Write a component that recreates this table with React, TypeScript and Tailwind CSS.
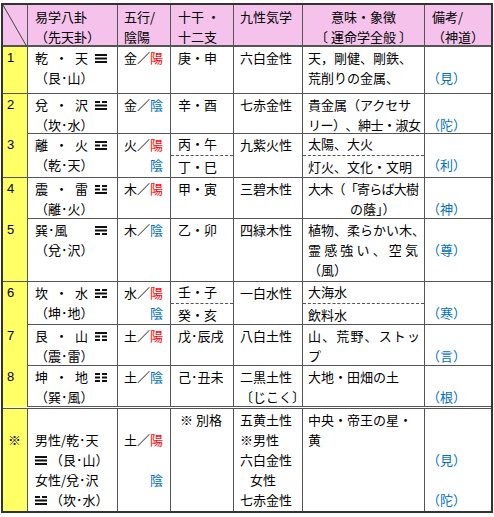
type Bars = [boolean, boolean, boolean];

const cols = "grid grid-cols-[24px_90px_53px_63px_69px_122px_67px]";
const edge = "border-l border-[#555]";
const red = "text-[#ff0000]";
const blue = "text-[#0070c0]";

// trigram, bars listed top to bottom, true = solid
function Tri({ bars, className = "" }: { bars: Bars; className?: string }) {
  return (
    <svg width="12" height="9" viewBox="0 0 12 9" className={className}>
      {bars.map((solid, i) =>
        solid ? (
          <rect key={i} x="0" y={i * 3.5} width="12" height="2" fill="#111" />
        ) : (
          <g key={i}>
            <rect x="0" y={i * 3.5} width="5" height="2" fill="#111" />
            <rect x="7" y={i * 3.5} width="5" height="2" fill="#111" />
          </g>
        )
      )}
    </svg>
  );
}

function Gua({ a, b, t }: { a: string; b: string; t: Bars }) {
  return (
    <div className="flex w-[72px] items-center justify-between">
      <span>{a}</span>
      <span>・</span>
      <span>{b}</span>
      <Tri bars={t} />
    </div>
  );
}

function J({ text, className }: { text: string; className: string }) {
  return (
    <div className={`flex justify-between ${className}`}>
      {text.split("").map((c, i) => (
        <span key={i}>{c}</span>
      ))}
    </div>
  );
}

function Split({ top, bottom, pad }: { top: React.ReactNode; bottom: React.ReactNode; pad: string }) {
  return (
    <div className="flex h-full flex-col">
      <div className={`h-[21px] ${pad}`}>{top}</div>
      <div className={`flex-1 border-t border-dashed border-[#555] pt-[1px] ${pad}`}>{bottom}</div>
    </div>
  );
}

const Blank = () => <div>&nbsp;</div>;

interface RowProps {
  num: string;
  h: string;
  gua: React.ReactNode;
  sub: string;
  gogyo: React.ReactNode;
  kan: React.ReactNode;
  star: React.ReactNode;
  imi: React.ReactNode;
  note: string;
  split?: boolean;
  border?: string;
}

function Row({ num, h, gua, sub, gogyo, kan, star, imi, note, split, border = "border-t" }: RowProps) {
  return (
    <div className={`${cols} ${border} border-[#555] ${h}`}>
      <div className="bg-[#ffff66] pl-[4px] pt-[1px] font-['Liberation_Sans','Noto_Sans_CJK_JP',sans-serif]">
        {num}
      </div>
      <div className={`${edge} pl-[7px] pt-[1px]`}>
        {gua}
        <div>{sub}</div>
      </div>
      <div className={`${edge} pl-[6px] pt-[1px]`}>{gogyo}</div>
      <div className={`${edge} ${split ? "" : "pl-[7px] pt-[1px]"}`}>{kan}</div>
      <div className={`${edge} pl-[6px] pt-[1px]`}>{star}</div>
      <div className={`${edge} ${split ? "" : "pl-[5px] pt-[1px]"} whitespace-nowrap`}>{imi}</div>
      <div className={`${edge} pl-[2px] pt-[1px] ${blue}`}>
        <Blank />
        <div>{note}</div>
      </div>
    </div>
  );
}

const Yang = ({ k }: { k: string }) => (
  <div>
    {k}／<span className={red}>陽</span>
  </div>
);
const Yin = ({ k }: { k: string }) => (
  <div>
    {k}／<span className={blue}>陰</span>
  </div>
);
const YinOnly = () => <div className={`pl-[26px] ${blue}`}>陰</div>;

export default function App() {
  return (
    <div className="min-h-screen bg-white pl-[1px] pt-[3px] text-[13px] leading-[20px] text-black font-['Noto_Sans_CJK_JP',sans-serif]">
      <div className="w-[492px] border-2 border-[#333]">
        {/* header */}
        <div className={`${cols} h-[40px] bg-[#f5c2ec]`}>
          <div className="relative">
            <svg className="absolute inset-0 h-full w-full">
              <line x1="0" y1="0" x2="100%" y2="100%" stroke="#444" strokeWidth="1" />
            </svg>
          </div>
          <div className={`${edge} pl-[7px] pt-[2px]`}>
            <div>易学八卦</div>
            <div>（先天卦）</div>
          </div>
          <div className={`${edge} pl-[6px] pt-[2px]`}>
            <div>五行/</div>
            <div>陰陽</div>
          </div>
          <div className={`${edge} pl-[7px] pt-[2px]`}>
            <div>十干 ・</div>
            <div>十二支</div>
          </div>
          <div className={`${edge} pl-[6px] pt-[2px]`}>
            <div>九性気学</div>
          </div>
          <div className={`${edge} pt-[2px] text-center`}>
            <div>意味・象徴</div>
            <div>〔 運命学全般 〕</div>
          </div>
          <div className={`${edge} pl-[7px] pt-[2px]`}>
            <div>備考/</div>
            <div>（神道）</div>
          </div>
        </div>

        <Row
          num="1"
          h="h-[48px]"
          border="border-t-2"
          gua={<Gua a="乾" b="天" t={[true, true, true]} />}
          sub="（艮･山）"
          gogyo={<Yang k="金" />}
          kan="庚・申"
          star="六白金性"
          imi={
            <>
              <div>天，剛健、剛鉄、</div>
              <div>荒削りの金属、</div>
            </>
          }
          note="（見）"
        />
        <Row
          num="2"
          h="h-[40px]"
          gua={<Gua a="兌" b="沢" t={[false, true, true]} />}
          sub="（坎･水）"
          gogyo={<Yin k="金" />}
          kan="辛・酉"
          star="七赤金性"
          imi={
            <>
              <div>貴金属（アクセサ</div>
              <J text="リー）、紳士・淑女" className="w-[112px] tracking-[-1px]" />
            </>
          }
          note="（陀）"
        />
        <Row
          num="3"
          h="h-[44px]"
          split
          gua={<Gua a="離" b="火" t={[true, false, true]} />}
          sub="（乾･天）"
          gogyo={
            <>
              <Yang k="火" />
              <YinOnly />
            </>
          }
          kan={<Split pad="pl-[7px]" top="丙・午" bottom="丁・巳" />}
          star="九紫火性"
          imi={<Split pad="pl-[5px]" top="太陽、大火" bottom="灯火、文化・文明" />}
          note="（利）"
        />
        <Row
          num="4"
          h="h-[41px]"
          gua={<Gua a="震" b="雷" t={[false, false, true]} />}
          sub="（離･火）"
          gogyo={<Yang k="木" />}
          kan="甲・寅"
          star="三碧木性"
          imi={
            <>
              <J text="大木（「寄らば大樹" className="w-[110px] tracking-[-1px]" />
              <div className="pl-[42px]">の蔭」）</div>
            </>
          }
          note="（神）"
        />
        <Row
          num="5"
          h="h-[63px]"
          gua={
            <div className="flex w-[72px] items-center justify-between">
              <span>巽･風</span>
              <Tri bars={[true, true, false]} />
            </div>
          }
          sub="（兌･沢）"
          gogyo={<Yin k="木" />}
          kan="乙・卯"
          star="四緑木性"
          imi={
            <>
              <div>植物、柔らかい木、</div>
              <J text="霊感強い、空気" className="w-[110px]" />
              <div>（風）</div>
            </>
          }
          note="（尊）"
        />
        <Row
          num="6"
          h="h-[43px]"
          split
          gua={<Gua a="坎" b="水" t={[false, true, false]} />}
          sub="（坤･地）"
          gogyo={
            <>
              <Yang k="水" />
              <YinOnly />
            </>
          }
          kan={<Split pad="pl-[7px]" top="壬・子" bottom="癸・亥" />}
          star="一白水性"
          imi={<Split pad="pl-[5px]" top="大海水" bottom="飲料水" />}
          note="（寒）"
        />
        <Row
          num="7"
          h="h-[41px]"
          gua={<Gua a="艮" b="山" t={[true, false, false]} />}
          sub="（震･雷）"
          gogyo={<Yang k="土" />}
          kan="戊･辰戌"
          star="八白土性"
          imi={
            <>
              <J text="山、荒野、ストッ" className="w-[112px]" />
              <div>プ</div>
            </>
          }
          note="（言）"
        />
        <Row
          num="8"
          h="h-[41px]"
          gua={<Gua a="坤" b="地" t={[false, false, false]} />}
          sub="（巽･風）"
          gogyo={<Yin k="土" />}
          kan="己･丑未"
          star={
            <>
              <div>二黒土性</div>
              <div>〔じこく〕</div>
            </>
          }
          imi={<div>大地・田畑の土</div>}
          note="（根）"
        />

        {/* special row */}
        <div className={`${cols} h-[105px] border-t-[3px] border-double border-[#555]`}>
          <div className="bg-[#ffff66] pl-[5px] pt-[1px]">
            <Blank />
            <div>※</div>
          </div>
          <div className={`${edge} border-solid pl-[7px] pt-[1px] whitespace-nowrap`}>
            <Blank />
            <div>男性/乾･天</div>
            <div className="flex items-center">
              <Tri bars={[true, true, true]} />
              <span className="ml-[3px]">（艮･山）</span>
            </div>
            <div>女性/兌･沢</div>
            <div className="flex items-center">
              <Tri bars={[false, true, true]} />
              <span className="ml-[3px]">（坎･水）</span>
            </div>
          </div>
          <div className={`${edge} border-solid pl-[6px] pt-[1px]`}>
            <Blank />
            <Yang k="土" />
            <Blank />
            <YinOnly />
          </div>
          <div className={`${edge} border-solid pl-[9px] pt-[1px]`}>
            <div>※ 別格</div>
          </div>
          <div className={`${edge} border-solid pl-[6px] pt-[1px]`}>
            <div>五黄土性</div>
            <div>※男性</div>
            <div>六白金性</div>
            <div className="pl-[10px]">女性</div>
            <div>七赤金性</div>
          </div>
          <div className={`${edge} border-solid pl-[5px] pt-[1px] whitespace-nowrap`}>
            <div>中央・帝王の星・</div>
            <div>黄</div>
          </div>
          <div className={`${edge} border-solid pl-[2px] pt-[1px] ${blue}`}>
            <Blank />
            <Blank />
            <div>（見）</div>
            <Blank />
            <div>（陀）</div>
          </div>
        </div>
      </div>
    </div>
  );
}
